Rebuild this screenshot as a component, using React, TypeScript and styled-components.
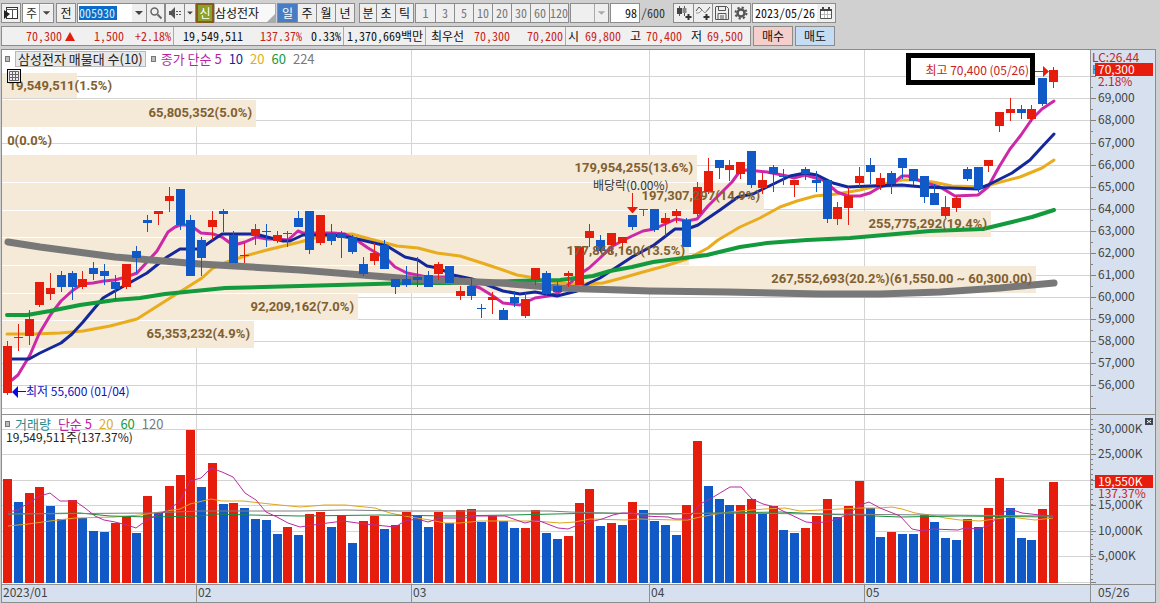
import React from "react";
import styled, { createGlobalStyle } from "styled-components";

const RED = "#e61c0c";
const BLUE = "#1259c8";
const INK_RED = "#c8241c";
const MONO = `"Noto Sans Mono CJK KR", "Noto Sans CJK KR", monospace`;
const SANS = `"Noto Sans CJK KR", sans-serif`;

const GlobalStyle = createGlobalStyle`
  * { box-sizing: border-box; }
  body { margin: 0; background: #d0d0d0; font: 12px/18px ${MONO}; color: #111; }
  button, input, select { font: inherit; color: inherit; margin: 0; padding: 0; border-radius: 0; }
`;

/* ---------- market data ---------- */

type Candle = [string, number, number, number, number];

// direction, high, body top, body bottom, low
const candles: Candle[] = [
  ["r", 341, 346, 393, 395], ["r", 324, 337, 338, 351], ["r", 310, 319, 336, 345], ["r", 282, 282, 305, 307],
  ["r", 273, 288, 294, 300], ["b", 271, 275, 287, 292], ["b", 271, 273, 287, 300], ["r", 271, 279, 287, 289],
  ["b", 262, 268, 274, 280], ["b", 264, 271, 276, 285], ["b", 275, 282, 289, 300], ["r", 264, 264, 287, 289],
  ["b", 246, 251, 258, 273], ["b", 215, 220, 223, 232], ["r", 211, 211, 214, 225], ["r", 187, 196, 201, 212],
  ["b", 189, 189, 225, 230], ["b", 215, 220, 276, 276], ["b", 237, 240, 258, 276], ["r", 211, 220, 227, 240],
  ["b", 209, 211, 214, 232], ["b", 231, 235, 263, 263], ["r", 243, 255, 256, 263], ["r", 224, 229, 236, 245],
  ["b", 224, 231, 232, 247], ["r", 231, 235, 241, 243], ["r", 231, 233, 234, 247], ["b", 211, 218, 227, 227],
  ["b", 211, 211, 250, 254], ["r", 215, 215, 243, 245], ["b", 224, 233, 241, 245], ["b", 231, 233, 238, 258],
  ["b", 235, 237, 252, 254], ["b", 257, 264, 274, 276], ["r", 243, 253, 261, 265], ["b", 240, 245, 269, 269],
  ["b", 279, 279, 287, 294], ["b", 266, 279, 285, 287], ["b", 257, 277, 280, 287], ["b", 271, 275, 287, 287],
  ["r", 262, 264, 274, 280], ["b", 266, 266, 283, 283], ["r", 286, 291, 296, 300], ["b", 278, 286, 296, 300],
  ["b", 304, 308, 309, 318], ["r", 292, 297, 300, 314], ["b", 308, 310, 320, 320], ["b", 291, 297, 303, 307],
  ["r", 293, 299, 316, 318], ["r", 268, 268, 280, 285], ["b", 271, 273, 294, 296], ["b", 282, 286, 292, 292],
  ["r", 271, 273, 276, 287], ["r", 247, 247, 285, 285], ["r", 224, 231, 238, 247], ["b", 235, 240, 251, 252],
  ["r", 233, 233, 245, 253], ["r", 237, 237, 243, 250], ["b", 215, 215, 227, 230], ["r", 209, 209, 210, 216],
  ["b", 209, 209, 230, 232], ["r", 213, 218, 223, 236], ["r", 209, 211, 216, 223], ["b", 218, 220, 247, 247],
  ["r", 182, 187, 214, 216], ["r", 158, 171, 192, 194], ["b", 160, 160, 168, 179], ["r", 160, 165, 170, 181],
  ["r", 162, 162, 174, 179], ["b", 151, 151, 185, 188], ["r", 173, 180, 188, 194], ["b", 165, 167, 174, 192],
  ["b", 169, 176, 177, 185], ["r", 180, 180, 185, 197], ["b", 167, 169, 174, 180], ["b", 171, 180, 183, 192],
  ["b", 180, 180, 219, 223], ["r", 202, 207, 219, 225], ["r", 187, 196, 208, 225], ["r", 167, 176, 183, 187],
  ["b", 158, 165, 172, 184], ["r", 173, 178, 185, 190], ["b", 171, 173, 184, 194], ["b", 158, 158, 168, 179],
  ["b", 169, 169, 181, 185], ["b", 176, 176, 197, 203], ["b", 184, 193, 205, 205], ["r", 196, 207, 216, 218],
  ["r", 196, 198, 208, 212], ["b", 167, 169, 179, 181], ["b", 167, 167, 189, 192], ["r", 160, 160, 166, 172],
  ["r", 112, 112, 126, 132], ["r", 98, 109, 113, 121], ["b", 105, 109, 113, 119], ["r", 105, 109, 119, 122],
  ["b", 78, 78, 104, 106], ["r", 67, 70, 82, 88],
];

// direction and bar height
const volumes =
  "r104 b81 r90 r96 b77 b64 r83 b65 b52 b51 r60 r66 b50 r87 b70 r97 r108 r153 b96 r120 b79 r80 b75 b64 b63 b49 r56 b48 r69 r71 b56 r68 b40 r62 r67 b54 r58 r71 b68 b56 r71 b60 r73 r74 b61 r67 b62 b55 r55 r73 b50 b44 r47 r80 r94 b57 r60 b58 r81 b73 b62 b58 b48 r78 r142 b97 b84 b78 r78 r84 b69 r77 b53 b50 r55 r67 r84 b66 r77 r102 b75 b46 r51 b49 b49 r68 b61 b45 b43 r64 b56 r75 r105 b75 b45 b43 r74 r101".split(" ");

const priceLines = [
  { color: "#e8ac1c", width: 3, points: "7,334 33,334 60,333 83,331 110,326 137,319 167,300 202,278 213,268 227,262 245,256 267,250 300,242 315,238 333,235 352,234 370,239 397,246 418,248 437,253 460,256 482,263 503,270 517,275 535,278 557,283 583,284 603,283 622,278 643,272 665,266 687,259 708,248 718,240 740,227 760,218 780,207 797,201 815,196 837,194 860,190 880,185 902,180 918,180 933,182 952,186 985,187 993,184 1020,177 1042,168 1054,160" },
  { color: "#cc28a8", width: 3, points: "8,382 12,380 18,375 30,355 39,334 51,314 61,301 72,291 82,284 93,283 104,281 115,280 126,277 137,273 147,262 157,251 168,232 175,227 180,225 190,225 201,233 213,234 222,237 230,243 238,244 245,242 256,237 267,239 277,239 288,240 298,231 303,233 333,233 345,234 355,239 368,248 380,255 388,260 395,267 407,273 417,275 427,277 449,277 460,280 472,285 480,288 493,296 503,303 520,305 535,298 548,296 558,293 568,285 580,274 589,268 600,258 611,247 622,241 632,236 643,231 654,229 665,224 676,219 687,221 697,219 708,206 719,195 732,182 740,171 747,170 767,172 787,176 794,178 805,175 823,180 837,192 848,196 860,196 870,193 880,187 892,184 902,176 908,176 923,182 940,187 955,196 978,195 988,187 999,167 1010,149 1021,135 1032,119 1042,109 1054,101" },
  { color: "#14289a", width: 3, points: "8,359 29,359 40,353 61,343 72,334 83,322 103,298 115,291 147,273 167,257 180,249 200,249 210,242 222,234 255,234 267,237 283,241 290,241 303,235 333,235 353,238 370,242 387,246 405,257 418,260 427,266 438,268 453,275 472,279 503,291 520,294 535,292 557,296 577,291 589,283 600,278 632,257 654,245 675,229 687,229 698,225 720,210 738,197 753,194 763,189 790,176 805,173 817,175 833,183 848,187 870,186 902,185 923,187 950,188 978,189 988,185 1002,178 1012,173 1030,160 1040,149 1054,134" },
  { color: "#129a3c", width: 4, points: "7,315 27,315 50,311 80,305 115,300 140,298 165,294 225,288 300,286 412,283 450,283 515,281 560,280 593,276 610,271 632,267 653,262 707,255 740,247 767,243 807,240 850,238 930,231 983,229 1012,222 1032,217 1054,210" },
  { color: "#787878", width: 7, points: "8,242 40,247 115,257 200,264 300,270 412,279 500,283 560,288 650,291 727,292 820,294 880,294 940,292 1000,288 1054,283" },
];

const volumeLines = [
  { color: "#dca61e", points: "8,526 28,524 50,521 75,518 115,517 140,515 160,512 180,509 190,504 211,499 222,501 243,501 270,504 300,507 325,505 345,505 375,508 390,513 410,517 430,520 445,523 460,523 480,521 535,521 560,523 575,522 590,519 625,520 640,519 675,520 688,520 700,517 722,513 740,511 765,509 785,508 800,511 820,510 860,508 880,508 892,507 902,509 915,513 930,515 945,518 960,520 980,521 995,519 1010,517 1035,520 1053,518" },
  { color: "#1a8a3a", points: "8,514 80,513 110,516 150,517 200,516 215,514 250,515 300,516 380,515 450,516 510,515 600,513 660,514 720,513 780,512 820,514 850,515 900,517 960,516 1053,517" },
  { color: "#808080", points: "8,514 150,513 200,511 300,511 345,510 400,511 550,511 570,512 600,513 660,514 720,513 820,514 1053,516" },
  { color: "#b82ca0", points: "8,512 18,510 28,503 40,496 50,493 60,501 75,501 85,508 95,516 104,520 115,522 127,525 136,528 147,520 168,510 180,501 190,481 201,478 211,468 222,472 233,477 245,493 256,500 266,512 277,517 288,523 300,527 320,524 343,521 365,524 395,527 405,521 417,519 428,522 440,518 465,518 475,516 505,516 525,523 537,520 558,528 568,529 578,525 590,522 602,519 613,515 622,513 632,513 642,516 668,517 675,519 688,519 700,504 710,499 730,487 741,487 752,499 763,504 775,507 785,512 806,522 817,523 830,521 840,518 850,513 860,505 869,502 880,508 900,516 912,529 922,531 933,529 958,530 965,528 978,529 990,525 1000,514 1010,509 1022,513 1040,515 1053,516" },
];

// width of each volume-profile band, with its label and the label's right edge
const profile = [
  { y: 73, w: 75, label: "19,549,511(1.5%)", end: 112, h: 25 },
  { y: 100, w: 254, label: "65,805,352(5.0%)", end: 252, h: 27 },
  { y: 128, w: 0, label: "0(0.0%)", end: 52, h: 27 },
  { y: 155, w: 695, label: "179,954,255(13.6%)", end: 693, h: 27 },
  { y: 183, w: 762, label: "197,307,297(14.9%)", end: 760, h: 27 },
  { y: 211, w: 989, label: "255,775,292(19.4%)", end: 987, h: 26 },
  { y: 238, w: 687, label: "177,868,160(13.5%)", end: 685, h: 27 },
  { y: 266, w: 1034, label: "267,552,693(20.2%)(61,550.00 ~ 60,300.00)", end: 1032, h: 27 },
  { y: 294, w: 356, label: "92,209,162(7.0%)", end: 354, h: 26 },
  { y: 321, w: 252, label: "65,353,232(4.9%)", end: 250, h: 27 },
];

const priceGrid = [76, 98, 120, 143, 165, 187, 209, 231, 253, 275, 297, 319, 341, 363, 385, 408];
const volumeGrid = [429, 454, 480, 505, 531, 556, 582];
const monthLines = [
  { x: 196, label: "02" },
  { x: 411, label: "03" },
  { x: 649, label: "04" },
  { x: 864, label: "05" },
];
const barX = (i: number) => Math.round(3 + (i * 1046) / 97);
const tone = (d: string) => (d === "r" ? RED : BLUE);

/* ---------- toolbar ---------- */

const Window = styled.main`
  display: flex;
  flex-direction: column;
  padding: 3px 4px 0 1px;
`;

const Toolbar = styled.form`
  display: flex;
  height: 20px;
  margin-bottom: 3px;
`;

const Group = styled.div<{ $gap?: number }>`
  display: flex;
  flex: none;
  margin-right: ${(p) => p.$gap ?? 2}px;
  border: 1px solid #8c8c8c;
  background: #efefef;
`;

const ToolButton = styled.button<{ $w: number; $active?: boolean; $muted?: boolean }>`
  display: flex;
  flex: none;
  align-items: center;
  justify-content: center;
  width: ${(p) => p.$w}px;
  border: 0;
  overflow: hidden;
  background: ${(p) => (p.$active ? "#4a7cc4" : "#efefef")};
  color: ${(p) => (p.$active ? "#fff" : p.$muted ? "#777" : "#111")};
  line-height: 18px;
  & + & { border-left: 1px solid #8c8c8c; }
`;

const Field = styled.input<{ $w: number; $align?: string }>`
  width: ${(p) => p.$w}px;
  border: 0;
  padding: 0 2px;
  background: #fff;
  text-align: ${(p) => p.$align ?? "left"};
`;

const CodeBox = styled.div`
  display: flex;
  align-items: center;
  width: 54px;
  padding-left: 1px;
  background: #fff;
`;

const CodeField = styled.input`
  width: 38px;
  height: 14px;
  border: 0;
  background: #0a6cc8;
  color: #d8ecff;
  line-height: 14px;
`;

const SelectBox = styled.span<{ $w: number }>`
  display: grid;
  grid-template-columns: 1fr 14px;
  width: ${(p) => p.$w}px;
  align-items: center;
  & > select { grid-area: 1 / 1 / 2 / 3; height: 18px; }
  & > svg { grid-area: 1 / 2; pointer-events: none; z-index: 1; border-left: 1px solid #aaa; }
`;

const PlainSelect = styled.select<{ $fill: string }>`
  appearance: none;
  border: 0;
  padding-left: 3px;
  background: ${(p) => p.$fill};
  color: #333;
`;

const NewTag = styled.span`
  flex: none;
  width: 18px;
  border: 2px solid #8a5a1c;
  background: #8ca02c;
  color: #fff;
  line-height: 16px;
  text-align: center;
`;

const StockName = styled.span`
  display: flex;
  flex: none;
  justify-content: space-between;
  align-items: flex-end;
  width: 62px;
  margin-right: 1px;
  border: 1px solid #aaa;
  background: #f8f8f8;
  white-space: nowrap;
`;

const Total = styled.span`
  width: 32px;
  color: #333;
  line-height: 20px;
`;

const Caret = ({ muted }: { muted?: boolean }) => (
  <svg width="14" height="18" viewBox="0 0 14 18" aria-hidden="true">
    <rect width="14" height="18" fill="#efefef" />
    <path d="M3 7h8l-4 4z" fill={muted ? "#aaa" : "#444"} />
  </svg>
);

/* ---------- quote line ---------- */

const QuoteRow = styled.div`
  display: flex;
  height: 20px;
  margin-bottom: 3px;
`;

const Quotes = styled.dl`
  display: flex;
  flex: none;
  width: 750px;
  margin: 0 2px 0 0;
  border: 1px solid #8c8c8c;
  background: #f0f0f0;
  line-height: 18px;
  white-space: nowrap;
`;

const Quote = styled.dd<{ $w: number; $up?: boolean; $end?: boolean }>`
  display: flex;
  flex: none;
  justify-content: flex-end;
  align-items: center;
  gap: 3px;
  width: ${(p) => p.$w}px;
  margin: 0;
  padding-right: ${(p) => (p.$end ? 2 : 0)}px;
  color: ${(p) => (p.$up ? INK_RED : "#111")};
  border-right: ${(p) => (p.$end ? "1px solid #aaa" : "0")};
`;

const QuoteName = styled.dt<{ $w: number }>`
  flex: none;
  width: ${(p) => p.$w}px;
  text-align: right;
`;

const TradeButton = styled.button<{ $fill: string }>`
  flex: none;
  width: 40px;
  margin-right: 2px;
  border: 1px solid #8c8c8c;
  background: ${(p) => p.$fill};
  line-height: 16px;
`;

/* ---------- chart ---------- */

const ChartFrame = styled.section`
  display: grid;
  grid-template-columns: minmax(0, 1fr) 65px;
  grid-template-rows: 365px 170px 17px;
  border: 1px solid #8c8c8c;
  font-family: ${SANS};
  font-size: 13px;
`;

const Pane = styled.div`
  position: relative;
  overflow: hidden;
  background: #fff;
  border-bottom: 1px solid #909090;
`;

const Axis = styled.div<{ $last?: boolean }>`
  overflow: hidden;
  background: #d6e0ee;
  border-left: 1px solid #909090;
  border-bottom: ${(p) => (p.$last ? "0" : "1px solid #909090")};
`;

const Dates = styled.div`
  background: #d6e0ee;
  overflow: hidden;
`;

const Plot = styled.svg`
  display: block;
  width: 100%;
  height: 100%;
  font-family: ${SANS};
  font-size: 12px;
`;

const ProfileText = styled.text`
  font-family: Roboto, "Liberation Sans", sans-serif;
  font-size: 13px;
  font-weight: bold;
  fill: #806030;
`;

const Legend = styled.div`
  position: absolute;
  top: 2px;
  left: 3px;
  display: flex;
  align-items: center;
  gap: 5px;
  height: 14px;
  line-height: 14px;
  white-space: nowrap;
`;

const Marker = styled.i`
  width: 5px;
  height: 6px;
  border: 1px solid #777;
  background: #bbb;
`;

const LegendBox = styled.span`
  padding: 0 2px;
  border: 1px solid #b8b8b8;
  background: #e8e8e8;
  color: #222;
`;

const Series = styled.span<{ $c: string }>`
  color: ${(p) => p.$c};
  margin-right: 2px;
`;

const VolumeNow = styled.div`
  position: absolute;
  top: 15px;
  left: 4px;
  font-size: 12px;
  line-height: 14px;
  color: #222;
`;

const HighNote = styled.div`
  position: absolute;
  top: 3px;
  left: 904px;
  width: 129px;
  height: 32px;
  padding-right: 1px;
  border: 5px solid #000;
  background: #fff;
  color: ${INK_RED};
  font-size: 12px;
  line-height: 24px;
  text-align: right;
  white-space: nowrap;
`;

const TableToggle = styled.button`
  position: absolute;
  top: 19px;
  left: 5px;
  width: 14px;
  height: 14px;
  border: 1px solid #000;
  background: #eee;
  display: flex;
`;

const MonthGrid = ({ y1, y2 }: { y1: number; y2: number }) => (
  <>
    {monthLines.map((m) => (
      <rect key={m.x} x={m.x} y={y1} width="1" height={y2 - y1} fill="#d4d4d4" />
    ))}
  </>
);

function PriceChart() {
  return (
    <Plot role="img" aria-label="삼성전자 일봉">
      <g transform="translate(-2 -50)">
        {priceGrid.map((y) => (
          <rect key={y} x="2" y={y} width="3000" height="1" fill="#d4d4d4" />
        ))}
        <MonthGrid y1={50} y2={414} />
        {profile.map((b) => (
          <rect key={b.y} x="2" y={b.y} width={b.w} height={b.h} fill="#f5e9d7" />
        ))}
        {[182, 210, 237, 265, 293, 320].map((y, i) => (
          <rect key={y} x="2" y={y} width={[695, 762, 687, 687, 356, 252][i]} height="1" fill="#fff" />
        ))}
        {priceLines.map((l) => (
          <polyline
            key={l.color}
            points={l.points}
            fill="none"
            stroke={l.color}
            strokeWidth={l.width}
            strokeLinejoin="round"
            strokeLinecap="round"
          />
        ))}
        {candles.map(([d, high, top, bottom, low], i) => (
          <g key={i} fill={tone(d)}>
            <rect x={barX(i) + 4} y={high} width="1" height={low - high} />
            <rect x={barX(i)} y={top} width="9" height={bottom - top} />
          </g>
        ))}
        {profile.map((b) => (
          <ProfileText key={b.y} x={b.end} y={b.y + 17} textAnchor="end">
            {b.label}
          </ProfileText>
        ))}
        <text x="593" y="190" fill="#333">배당락(0.00%)</text>
        <path d="M632 193h1v14h5l-5 6h-1l-5-6h5z" fill={RED} />
        <path d="M12 392l6-6v5h8v1h-8v6z" fill="#0a0ae0" />
        <text x="26" y="396" fill="#1010c0">최저 55,600 (01/04)</text>
        <path d="M1035 71h8v-5l6 5.500-6 5.500v-5h-8z" fill={RED} />
      </g>
    </Plot>
  );
}

function VolumeChart() {
  return (
    <Plot role="img" aria-label="거래량">
      <g transform="translate(-2 -415)">
        {volumeGrid.map((y) => (
          <rect key={y} x="2" y={y} width="3000" height="1" fill="#d4d4d4" />
        ))}
        <MonthGrid y1={415} y2={584} />
        {volumes.map((v, i) => {
          const h = Number(v.slice(1));
          return <rect key={i} x={barX(i)} y={583 - h} width="9" height={h} fill={tone(v[0])} />;
        })}
        {volumeLines.map((l) => (
          <polyline key={l.color} points={l.points} fill="none" stroke={l.color} strokeWidth="1" />
        ))}
      </g>
    </Plot>
  );
}

function PriceAxis() {
  return (
    <Plot>
      <g transform="translate(-1091 -50)">
        {priceGrid.map((y, i) => (
          <g key={y} fill="#808080">
            <rect x="1090" y={y} width="6" height="1" />
            <rect x="1090" y={y + 11} width="3" height="1" />
            {i > 0 && i < 15 && (
              <text x="1098" y={y + 4} fill="#444">{`${70 - i},000`}</text>
            )}
          </g>
        ))}
        <text x="1092" y="62" fill={INK_RED}>LC:26.44</text>
        <text x="1092" y="74" fill={BLUE}>H</text>
        <rect x="1095" y="63" width="58" height="13" fill={RED} />
        <text x="1098" y="74" fill="#fff">70,300</text>
        <text x="1098" y="86" fill={INK_RED}>2.18%</text>
      </g>
    </Plot>
  );
}

function VolumeAxis() {
  return (
    <Plot>
      <g transform="translate(-1091 -415)">
        {Array.from({ length: 33 }, (_, i) => (
          <rect key={i} x="1090" y={419 + i * 5} width="3" height="1" fill="#808080" />
        ))}
        {volumeGrid.map((y, i) => (
          <g key={y}>
            <rect x="1090" y={y} width="6" height="1" fill="#808080" />
            {i < 6 && <text x="1098" y={y + 4} fill="#444">{`${30 - i * 5},000K`}</text>}
          </g>
        ))}
        <rect x="1095" y="475" width="58" height="13" fill={RED} />
        <text x="1098" y="486" fill="#fff">19,550K</text>
        <text x="1098" y="498" fill={INK_RED}>137.37%</text>
        <rect x="1145" y="418" width="8" height="7" fill="#3c4450" />
        <path d="M1147 420l4 3m0-3l-4 3" stroke="#fff" />
      </g>
    </Plot>
  );
}

const minutes = ["1", "3", "5", "10", "20", "30", "60", "120"];

export default function App() {
  return (
    <Window>
      <GlobalStyle />
      <Toolbar onSubmit={(e) => e.preventDefault()}>
        <Group $gap={1}>
          <ToolButton type="button" $w={18} aria-label="창 연결">
            <svg width="14" height="12" viewBox="0 0 14 12">
              <rect x="2.500" y=".5" width="11" height="11" fill="#fff" stroke="#333" />
              <path d="M2 2.500h12M8.500 2v9" stroke="#555" />
              <path d="M0 3l6 4-6 5z" fill="#222" />
            </svg>
          </ToolButton>
        </Group>
        <Group>
          <SelectBox $w={30}>
            <PlainSelect $fill="#fff" aria-label="종목 구분"><option>주</option></PlainSelect>
            <Caret />
          </SelectBox>
        </Group>
        <Group $gap={1}>
          <ToolButton type="button" $w={18}>전</ToolButton>
        </Group>
        <Group $gap={0}>
          <CodeBox><CodeField aria-label="종목코드" defaultValue="005930" /></CodeBox>
          <ToolButton type="button" $w={14} aria-label="최근 종목"><Caret /></ToolButton>
          <ToolButton type="button" $w={18} aria-label="종목 검색">
            <svg width="14" height="14" viewBox="0 0 14 14" fill="none" stroke="#666">
              <circle cx="5.500" cy="5.500" r="3.500" strokeWidth="1.500" />
              <path d="M8.500 8.500l4 4" strokeWidth="2" />
            </svg>
          </ToolButton>
        </Group>
        <Group $gap={0}>
          <ToolButton type="button" $w={18} aria-label="소리">
            <svg width="14" height="12" viewBox="0 0 14 12" fill="#555">
              <path d="M1 4h2l4-4v12L3 8H1z" />
              <path d="M8 4h2v1H8zM11 4h2v1h-2zM8 7h2v1H8zM11 7h2v1h-2z" />
            </svg>
          </ToolButton>
          <ToolButton type="button" $w={11} aria-label="소리 설정"><Caret /></ToolButton>
        </Group>
        <NewTag>신</NewTag>
        <StockName>
          삼성전자
          <svg width="8" height="8" viewBox="0 0 8 8"><path d="M8 0v8H0z" fill="#aaa" /></svg>
        </StockName>
        <Group $gap={4}>
          <ToolButton type="button" $w={19} $active>일</ToolButton>
          <ToolButton type="button" $w={19}>주</ToolButton>
          <ToolButton type="button" $w={19}>월</ToolButton>
          <ToolButton type="button" $w={19}>년</ToolButton>
        </Group>
        <Group $gap={1}>
          <ToolButton type="button" $w={16}>분</ToolButton>
          <ToolButton type="button" $w={19}>초</ToolButton>
          <ToolButton type="button" $w={18}>틱</ToolButton>
        </Group>
        <Group $gap={1}>
          {minutes.map((m) => (
            <ToolButton key={m} type="button" $w={19} $muted>{m}</ToolButton>
          ))}
        </Group>
        <Group $gap={1}>
          <SelectBox $w={37}>
            <PlainSelect $fill="#efefef" aria-label="사용자 주기" disabled><option> </option></PlainSelect>
            <Caret muted />
          </SelectBox>
        </Group>
        <Group $gap={1}>
          <Field $w={28} $align="right" aria-label="표시 개수" defaultValue="98" />
        </Group>
        <Total>/600</Total>
        <Group $gap={1}>
          <ToolButton type="button" $w={19} aria-label="차트 추가">
            <svg width="16" height="16" viewBox="0 0 16 16">
              <path d="M3.500 1v10M8.500 1v10" stroke="#555" />
              <path d="M1 3h5v6H1z" fill="#444" />
              <path d="M6.500 3h4v5h-4z" fill="#888" />
              <path d="M12.500 9v6M9.500 12h6" stroke="#333" strokeWidth="2" />
            </svg>
          </ToolButton>
          <ToolButton type="button" $w={19} aria-label="지표 추가">
            <svg width="16" height="16" viewBox="0 0 16 16" fill="none">
              <path d="M1 6l3-4 6 6 5-6" stroke="#555" />
              <path d="M1 8h3l3-3 3 3 4-4" stroke="#999" />
              <path d="M11.500 9v6M8.500 12h6" stroke="#333" strokeWidth="2" />
            </svg>
          </ToolButton>
          <ToolButton type="button" $w={19} aria-label="저장">
            <svg width="14" height="14" viewBox="0 0 14 14" fill="none" stroke="#555">
              <path d="M1 .5h10.500l2 2v11H.5V1z" />
              <path d="M3.500.5v4h7v-4M3 13.500v-6h8v6M5 10h4M5 12h4" />
            </svg>
          </ToolButton>
          <ToolButton type="button" $w={19} aria-label="설정">
            <svg width="14" height="14" viewBox="0 0 14 14" fill="none" stroke="#555">
              <circle cx="7" cy="7" r="3.500" strokeWidth="2.500" />
              <circle cx="7" cy="7" r="5.500" strokeWidth="2" strokeDasharray="2.200 2.120" />
            </svg>
          </ToolButton>
        </Group>
        <Group>
          <Field $w={64} aria-label="조회 일자" defaultValue="2023/05/26" />
          <ToolButton type="button" $w={18} aria-label="달력">
            <svg width="12" height="12" viewBox="0 0 12 12">
              <path d="M.5 2.500h11v9H.5z" fill="#fff" stroke="#555" />
              <path d="M0 2h12v2H0zM2 0h2v3H2zM8 0h2v3H8z" fill="#444" />
              <path d="M1 7.500h10M4.500 4v7M7.500 4v7" stroke="#bbb" />
            </svg>
          </ToolButton>
        </Group>
      </Toolbar>

      <QuoteRow>
        <Quotes>
          <Quote $w={73} $up>
            70,300
            <svg width="10" height="9" viewBox="0 0 10 9"><path d="M5 0l5 9H0z" fill={RED} /></svg>
          </Quote>
          <Quote $w={49} $up>1,500</Quote>
          <Quote $w={50} $up $end>+2.18%</Quote>
          <Quote $w={69}>19,549,511</Quote>
          <Quote $w={59} $up>137.37%</Quote>
          <Quote $w={42} $end>0.33%</Quote>
          <Quote $w={82} $end>1,370,669백만</Quote>
          <QuoteName $w={38}>최우선</QuoteName>
          <Quote $w={46} $up>70,300</Quote>
          <Quote $w={56} $up $end>70,200</Quote>
          <QuoteName $w={13}>시</QuoteName>
          <Quote $w={42} $up>69,800</Quote>
          <QuoteName $w={20}>고</QuoteName>
          <Quote $w={41} $up>70,400</Quote>
          <QuoteName $w={20}>저</QuoteName>
          <Quote $w={41} $up>69,500</Quote>
        </Quotes>
        <TradeButton type="button" $fill="#f5cfcb">매수</TradeButton>
        <TradeButton type="button" $fill="#c4dcf4">매도</TradeButton>
      </QuoteRow>

      <ChartFrame>
        <Pane>
          <PriceChart />
          <Legend>
            <Marker />
            <LegendBox>삼성전자 매물대 수(10)</LegendBox>
            <Marker />
            <Series $c="#b824a4">종가 단순 5</Series>
            <Series $c="#14289a">10</Series>
            <Series $c="#dcae18">20</Series>
            <Series $c="#129a3c">60</Series>
            <Series $c="#787878">224</Series>
          </Legend>
          <TableToggle type="button" aria-label="표 보기">
            <svg width="12" height="12" viewBox="0 0 12 12">
              <path d="M1.500 1.500h9v9h-9zM1.500 4.500h9M1.500 7.500h9M4.500 1.500v9M7.500 1.500v9" fill="none" stroke="#666" />
            </svg>
          </TableToggle>
          <HighNote>최고 70,400 (05/26)</HighNote>
        </Pane>
        <Axis><PriceAxis /></Axis>
        <Pane>
          <VolumeChart />
          <Legend>
            <Marker />
            <Series $c="#2a8a8c">거래량</Series>
            <Series $c="#b824a4">단순 5</Series>
            <Series $c="#dcae18">20</Series>
            <Series $c="#129a3c">60</Series>
            <Series $c="#787878">120</Series>
          </Legend>
          <VolumeNow>19,549,511주(137.37%)</VolumeNow>
        </Pane>
        <Axis><VolumeAxis /></Axis>
        <Dates>
          <Plot>
            <g transform="translate(-2 0)">
              <text x="3" y="12" fill="#444">2023/01</text>
              {monthLines.map((m) => (
                <g key={m.x}>
                  <rect x={m.x} y="0" width="1" height="18" fill="#909090" />
                  <text x={m.x + 2} y="12" fill="#444">{m.label}</text>
                </g>
              ))}
            </g>
          </Plot>
        </Dates>
        <Axis $last>
          <Plot><text x="7" y="12" fill="#444">05/26</text></Plot>
        </Axis>
      </ChartFrame>
    </Window>
  );
}
